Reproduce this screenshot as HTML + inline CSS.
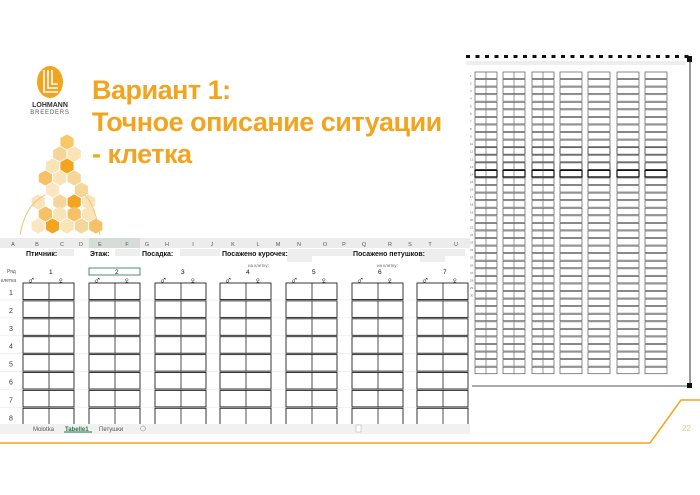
<!DOCTYPE html>
<html><head><meta charset="utf-8">
<style>
body{margin:0;width:700px;height:495px;overflow:hidden;background:#fff;position:relative;font-family:"Liberation Sans",sans-serif}
.t{position:absolute;left:92px;color:#f3a41f;font-weight:bold;font-size:27px;letter-spacing:-0.5px;line-height:32px}
.a{position:absolute}
</style></head><body>
<div class="t" style="top:74px">Вариант 1:<br>Точное описание ситуации<br>- клетка</div>

<svg class="a" style="left:0;top:0" width="700" height="495" id="s">
<ellipse cx="50" cy="82" rx="13" ry="16" fill="#f3a41f"/>
<path d="M44 70v22h14M48 70v18h10M52 70v14h6" stroke="#fff" stroke-width="1.6" fill="none"/>
<text x="50" y="107" font-size="7" font-weight="bold" text-anchor="middle" fill="#333">LOHMANN</text>
<text x="50" y="114" font-size="6" text-anchor="middle" fill="#555" letter-spacing="0.8">BREEDERS</text>
<g id="hex"></g>
<path d="M0 443H650L681 400H700" stroke="#f3a41f" stroke-width="1.5" fill="none"/>
<text x="682" y="431" font-size="8" fill="#f5c77a">22</text>
<g id="right"></g>
<g id="left"></g>
</svg>
<script>
const NS="http://www.w3.org/2000/svg";
function el(p,t,a,txt){const e=document.createElementNS(NS,t);for(const k in a)e.setAttribute(k,a[k]);if(txt!==undefined)e.textContent=txt;p.appendChild(e);return e;}
const hx=document.getElementById('hex');
const hexes=[[65,140,'#f8c766'],[59,150,'#f6d59a'],[71,150,'#fbe3b8'],[65,160,'#f3a41f'],[53,160,'#fbe3b8'],[47,170,'#f6c066'],[59,170,'#fbe3b8'],[71,170,'#f6d59a'],[53,180,'#fbe6c2'],[65,180,'#fff'],[77,180,'#f6d59a'],[59,190,'#f6d59a'],[71,190,'#f3a41f'],[83,190,'#fbe3b8'],[41,190,'#fbe3b8'],[47,200,'#f6c066'],[59,200,'#fbe3b8'],[71,200,'#f6c066'],[83,200,'#fbe3b8'],[53,210,'#f3a41f'],[65,210,'#fbe3b8'],[77,210,'#f6d59a'],[41,210,'#fbe6c2'],[89,210,'#f6c066']];
hexes.forEach(([x,y,c])=>{x=(x-65)*1.2+67;y=(y-140)*1.2+142;let p=[];for(let i=0;i<6;i++){const a=Math.PI/3*i+Math.PI/6;p.push((x+7.6*Math.cos(a)).toFixed(1)+','+(y+7.6*Math.sin(a)).toFixed(1));}el(hx,'polygon',{points:p.join(' '),fill:c});});
el(hx,'path',{d:'M20 235 Q25 205 45 195 M100 235 Q95 205 85 195',stroke:'#f3c677','stroke-width':1,fill:'none'});
const R=document.getElementById('right');
el(R,'rect',{x:462,y:50,width:235,height:340,fill:'#fff'});
for(let x=466;x<690;x+=9.5)el(R,'rect',{x:x,y:55,width:4,height:3,fill:'#111'});
el(R,'line',{x1:690,y1:58,x2:690,y2:385,stroke:'#333','stroke-width':1});
el(R,'line',{x1:472,y1:386,x2:692,y2:386,stroke:'#555','stroke-width':1});
el(R,'rect',{x:687,y:383,width:5,height:5,fill:'#111'});
el(R,'rect',{x:687,y:56,width:5,height:6,fill:'#111'});
el(R,'rect',{x:466,y:61,width:220,height:4,fill:'#eee'});
const gx=[475,503,532,560,588,617,645];
for(let r=0;r<40;r++){const y=72+r*7.57;
 if(r<30)el(R,'text',{x:470,y:y+5,'font-size':3,fill:'#666'},r+1);
 gx.forEach((x,i)=>{el(R,'rect',{x:x,y:y,width:22,height:6.5,fill:'none',stroke:(r==13||r==10||r==12)?'#111':'#555','stroke-width':(r==13)?1.2:0.7});
  if(i<3)el(R,'line',{x1:x+11,y1:y,x2:x+11,y2:y+6.5,stroke:'#555','stroke-width':0.6});});}
const L=document.getElementById('left');
el(L,'rect',{x:0,y:238,width:470,height:197,fill:'#fff'});
el(L,'rect',{x:0,y:238,width:470,height:10,fill:'#ececec'});
const cols=[['A',13],['B',37],['C',62],['D',81],['E',100],['F',127],['G',147],['H',167],['I',193],['J',212],['K',233],['L',258],['M',278],['N',299],['O',325],['P',344],['Q',364],['R',390],['S',410],['T',430],['U',456]];
el(L,'rect',{x:89,y:238,width:51,height:10,fill:'#d6dcd6'});
cols.forEach(([c,x])=>el(L,'text',{x:x,y:246,'font-size':5.5,'text-anchor':'middle',fill:'#555'},c));
[[49,255,25],[115,255,25],[180,255,40],[288,255,65],[420,255,45],[287,261,25],[420,261,25]].forEach(([x,y,w])=>el(L,'rect',{x:x,y:y-6,width:w,height:7,fill:'#eee'}));
[['Птичник:',26],['Этаж:',90],['Посадка:',142],['Посажено курочек:',222],['Посажено петушков:',353]].forEach(([t,x])=>el(L,'text',{x:x,y:256,'font-size':7,'font-weight':'bold',fill:'#111'},t));
el(L,'text',{x:248,y:267,'font-size':4.5,fill:'#666'},'на клетку:');
el(L,'text',{x:377,y:267,'font-size':4.5,fill:'#666'},'на клетку:');
el(L,'text',{x:7,y:273,'font-size':5,fill:'#555'},'Ряд');
el(L,'text',{x:1,y:282,'font-size':5,fill:'#555'},'клетка');
el(L,'rect',{x:89,y:268,width:51,height:7,fill:'none',stroke:'#217346','stroke-width':0.8});
const lg=[23,89,155,220,286,352,417];
lg.forEach((x,i)=>{el(L,'text',{x:x+26,y:274,'font-size':6.5,fill:'#111'},i+1);
 el(L,'text',{x:x+4,y:284,'font-size':11,fill:'#111'},'♂');
 el(L,'text',{x:x+34,y:284,'font-size':10,fill:'#111'},'♀');});
for(let r=0;r<8;r++){const y=283+r*17.9;
 el(L,'text',{x:11,y:y+12,'font-size':7,'text-anchor':'middle',fill:'#333'},r+1);
 el(L,'line',{x1:0,y1:y+17,x2:470,y2:y+17,stroke:'#e3e3e3','stroke-width':0.5});
 lg.forEach(x=>{el(L,'rect',{x:x,y:y,width:51,height:16.5,fill:'none',stroke:'#222','stroke-width':0.9});
  el(L,'line',{x1:x+26,y1:y,x2:x+26,y2:y+16.5,stroke:'#222','stroke-width':0.8});});}
el(L,'rect',{x:0,y:424,width:470,height:10,fill:'#f1f1f1'});
el(L,'text',{x:33,y:431,'font-size':6,fill:'#555'},'Molotka');
el(L,'text',{x:65,y:431,'font-size':6,'font-weight':'bold',fill:'#217346'},'Tabelle1');
el(L,'line',{x1:64,y1:432,x2:92,y2:432,stroke:'#217346','stroke-width':1});
el(L,'text',{x:99,y:431,'font-size':6,fill:'#555'},'Петушки');
el(L,'circle',{cx:143,cy:428.5,r:2.5,fill:'none',stroke:'#888','stroke-width':0.5});
el(L,'rect',{x:356,y:425,width:5,height:7,fill:'#fff',stroke:'#aaa','stroke-width':0.5});
</script>
</body></html>
